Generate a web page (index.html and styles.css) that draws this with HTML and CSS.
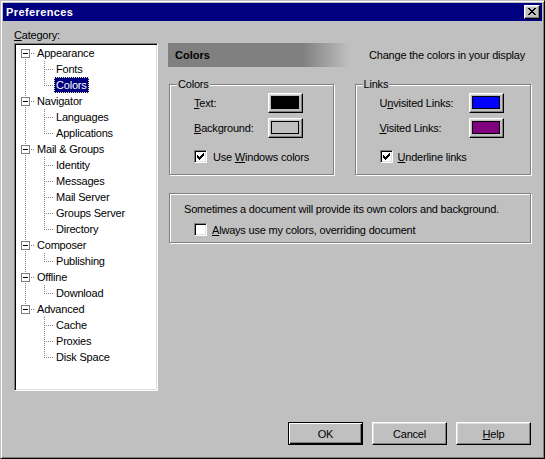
FILE: index.html
```html
<!DOCTYPE html>
<html>
<head>
<meta charset="utf-8">
<title>Preferences</title>
<link rel="stylesheet" href="styles.css">
</head>
<body>
<div class="window">
  <div class="titlebar">
    <span class="title">Preferences</span>
    <span class="close"><svg width="8" height="7" viewBox="0 0 8 7" shape-rendering="crispEdges"><path d="M0 0h2v1h-2z M6 0h2v1h-2z M1 1h2v1h-2z M5 1h2v1h-2z M2 2h4v1h-4z M3 3h2v1h-2z M2 4h4v1h-4z M1 5h2v1h-2z M5 5h2v1h-2z M0 6h2v1h-2z M6 6h2v1h-2z" fill="#000"/></svg></span>
  </div>
  <div class="body">
    <div class="left">
      <div class="cat-label"><u>C</u>ategory:</div>
      <div class="tree">
        <div class="row"><span class="cell rf"><span class="box"></span></span><span class="label">Appearance</span></div>
        <div class="row"><span class="cell v"></span><span class="cell t"></span><span class="label">Fonts</span></div>
        <div class="row"><span class="cell v"></span><span class="cell l"></span><span class="label sel">Colors</span></div>
        <div class="row"><span class="cell rm"><span class="box"></span></span><span class="label">Navigator</span></div>
        <div class="row"><span class="cell v"></span><span class="cell t"></span><span class="label">Languages</span></div>
        <div class="row"><span class="cell v"></span><span class="cell l"></span><span class="label">Applications</span></div>
        <div class="row"><span class="cell rm"><span class="box"></span></span><span class="label">Mail &amp; Groups</span></div>
        <div class="row"><span class="cell v"></span><span class="cell t"></span><span class="label">Identity</span></div>
        <div class="row"><span class="cell v"></span><span class="cell t"></span><span class="label">Messages</span></div>
        <div class="row"><span class="cell v"></span><span class="cell t"></span><span class="label">Mail Server</span></div>
        <div class="row"><span class="cell v"></span><span class="cell t"></span><span class="label">Groups Server</span></div>
        <div class="row"><span class="cell v"></span><span class="cell l"></span><span class="label">Directory</span></div>
        <div class="row"><span class="cell rm"><span class="box"></span></span><span class="label">Composer</span></div>
        <div class="row"><span class="cell v"></span><span class="cell l"></span><span class="label">Publishing</span></div>
        <div class="row"><span class="cell rm"><span class="box"></span></span><span class="label">Offline</span></div>
        <div class="row"><span class="cell v"></span><span class="cell l"></span><span class="label">Download</span></div>
        <div class="row"><span class="cell rl"><span class="box"></span></span><span class="label">Advanced</span></div>
        <div class="row"><span class="cell"></span><span class="cell t"></span><span class="label">Cache</span></div>
        <div class="row"><span class="cell"></span><span class="cell t"></span><span class="label">Proxies</span></div>
        <div class="row"><span class="cell"></span><span class="cell l"></span><span class="label">Disk Space</span></div>
      </div>
    </div>
    <div class="right">
      <div class="head-row">
        <div class="banner">Colors</div>
        <div class="desc">Change the colors in your display</div>
      </div>
      <div class="groups">
        <div class="group g-colors">
          <span class="legend">Colors</span>
          <div class="field-row"><span class="field-label"><u>T</u>ext:</span><span class="swatch-btn"><span class="swatch sw-black"></span></span></div>
          <div class="field-row"><span class="field-label"><u>B</u>ackground:</span><span class="swatch-btn"><span class="swatch sw-gray"></span></span></div>
          <div class="check-row"><span class="check"><svg width="7" height="7" viewBox="0 0 7 7" shape-rendering="crispEdges"><path d="M0 2h1v3h-1z M1 3h1v3h-1z M2 4h1v3h-1z M3 3h1v3h-1z M4 2h1v3h-1z M5 1h1v3h-1z M6 0h1v3h-1z" fill="#000"/></svg></span><span>Use <u>W</u>indows colors</span></div>
        </div>
        <div class="group g-links">
          <span class="legend">Links</span>
          <div class="field-row"><span class="field-label wide">U<u>n</u>visited Links:</span><span class="swatch-btn"><span class="swatch sw-blue"></span></span></div>
          <div class="field-row"><span class="field-label wide"><u>V</u>isited Links:</span><span class="swatch-btn"><span class="swatch sw-purple"></span></span></div>
          <div class="check-row narrow"><span class="check"><svg width="7" height="7" viewBox="0 0 7 7" shape-rendering="crispEdges"><path d="M0 2h1v3h-1z M1 3h1v3h-1z M2 4h1v3h-1z M3 3h1v3h-1z M4 2h1v3h-1z M5 1h1v3h-1z M6 0h1v3h-1z" fill="#000"/></svg></span><span><u>U</u>nderline links</span></div>
        </div>
      </div>
      <div class="group g-doc">
        <div class="doc-text">Sometimes a document will provide its own colors and background.</div>
        <div class="check-row doc-check"><span class="check"></span><span><u>A</u>lways use my colors, overriding document</span></div>
      </div>
    </div>
  </div>
  <div class="buttons">
    <button class="btn default">OK</button>
    <button class="btn">Cancel</button>
    <button class="btn"><u>H</u>elp</button>
  </div>
</div>
</body>
</html>
```
FILE: styles.css
```css
html, body {
  margin: 0;
  padding: 0;
  background: #c0c0c0;
}
body {
  font-family: "Liberation Sans", Arial, sans-serif;
  font-size: 11px;
  letter-spacing: -0.2px;
  color: #000;
}
.window {
  width: 545px;
  height: 459px;
  box-sizing: border-box;
  background: #c0c0c0;
  border: 1px solid;
  border-color: #c0c0c0 #000 #000 #c0c0c0;
  box-shadow: inset 1px 1px #fff, inset -1px -1px #808080;
  padding: 2px;
  display: flex;
  flex-direction: column;
}
.titlebar {
  height: 18px;
  flex: none;
  background: #000080;
  color: #fff;
  display: flex;
  align-items: center;
  padding: 0 2px 0 3px;
}
.title {
  font-weight: bold;
  font-size: 11px;
  letter-spacing: 0.4px;
}
.close {
  margin-left: auto;
  width: 16px;
  height: 14px;
  box-sizing: border-box;
  background: #c0c0c0;
  border: 1px solid;
  border-color: #fff #000 #000 #fff;
  box-shadow: inset -1px -1px #808080, inset 1px 1px #dfdfdf;
  display: flex;
  align-items: center;
  justify-content: center;
}
.close svg { display: block; margin: 0 1px 1px 0; }

.body {
  flex: 1;
  display: flex;
  gap: 10px;
  padding: 7px 11px 0 11px;
  min-height: 0;
}
.left {
  width: 144px;
  flex: none;
  display: flex;
  flex-direction: column;
}
.cat-label {
  height: 14px;
  line-height: 14px;
  margin-bottom: 1px;
}
.tree {
  height: 348px;
  box-sizing: border-box;
  background: #fff;
  border: 1px solid;
  border-color: #808080 #fff #fff #808080;
  box-shadow: inset 1px 1px #000, inset -1px -1px #dfdfdf;
  padding: 1px 0 0 1px;
}
.row {
  display: flex;
  height: 16px;
  align-items: flex-start;
}
.cell {
  display: block;
  width: 19px;
  height: 16px;
  flex: none;
  --dv: repeating-linear-gradient(to bottom, #808080 0 1px, transparent 1px 2px);
  --dh: repeating-linear-gradient(to right, #808080 0 1px, transparent 1px 2px);
}
.cell.v {
  background: var(--dv) 9px 0 / 1px 16px no-repeat;
}
.cell.t {
  background: var(--dh) 11px 8px / 8px 1px no-repeat, var(--dv) 9px 0 / 1px 16px no-repeat;
}
.cell.l {
  background: var(--dh) 11px 8px / 8px 1px no-repeat, var(--dv) 9px 0 / 1px 9px no-repeat;
}
.cell.rf {
  background: var(--dh) 15px 8px / 4px 1px no-repeat, var(--dv) 9px 8px / 1px 8px no-repeat;
}
.cell.rm {
  background: var(--dh) 15px 8px / 4px 1px no-repeat, var(--dv) 9px 0 / 1px 16px no-repeat;
}
.cell.rl {
  background: var(--dh) 15px 8px / 4px 1px no-repeat, var(--dv) 9px 0 / 1px 8px no-repeat;
}
.box {
  display: block;
  width: 9px;
  height: 9px;
  box-sizing: border-box;
  margin: 4px 0 0 5px;
  border: 1px solid #808080;
  background: linear-gradient(#000, #000) 1px 3px / 5px 1px no-repeat, #fff;
}
.label {
  height: 16px;
  line-height: 16px;
  padding: 0 2px;
  white-space: nowrap;
  box-sizing: border-box;
}
.label.sel {
  background: #000080;
  color: #fff;
  outline: 1px dotted #e8e8a0;
  outline-offset: -1px;
}

.right {
  flex: 1;
  min-width: 0;
  display: flex;
  flex-direction: column;
  padding-top: 15px;
}
.head-row {
  display: flex;
  align-items: center;
  height: 24px;
}
.banner {
  width: 182px;
  height: 24px;
  box-sizing: border-box;
  padding-left: 7px;
  line-height: 24px;
  font-weight: bold;
  letter-spacing: 0;
  background: linear-gradient(to right, #808080 135px, #c0c0c0 182px);
}
.desc {
  margin-left: 19px;
  white-space: nowrap;
}
.groups {
  display: flex;
  gap: 21px;
  margin-top: 17px;
  padding-left: 1px;
}
.group {
  position: relative;
  box-sizing: border-box;
  border: 1px solid #808080;
  box-shadow: inset 1px 1px #fff, 1px 1px #fff;
}
.g-colors {
  width: 165px;
  height: 91px;
  padding: 8px 0 0 24px;
}
.g-links {
  width: 177px;
  height: 91px;
  padding: 8px 0 0 24px;
}
.legend {
  position: absolute;
  top: -7px;
  left: 7px;
  background: #c0c0c0;
  padding: 0 1px;
  line-height: 13px;
}
.field-row {
  display: flex;
  align-items: center;
  height: 20px;
}
.field-row + .field-row { margin-top: 5px; }
.field-label { width: 74px; white-space: nowrap; }
.field-label.wide { width: 89px; }
.swatch-btn {
  display: block;
  width: 35px;
  height: 20px;
  box-sizing: border-box;
  background: #c0c0c0;
  border: 1px solid;
  border-color: #fff #000 #000 #fff;
  box-shadow: inset -1px -1px #808080, inset 1px 1px #dfdfdf;
  padding: 2px 3px 3px 2px;
}
.swatch {
  display: block;
  width: 100%;
  height: 100%;
  box-sizing: border-box;
  border: 1px solid #000;
}
.sw-black { background: #000; }
.sw-gray { background: #c0c0c0; }
.sw-blue { background: #0000ff; }
.sw-purple { background: #800080; }

.check-row {
  display: flex;
  align-items: center;
  gap: 6px;
  margin-top: 12px;
  white-space: nowrap;
}
.check-row.narrow { gap: 5px; }
.check {
  width: 13px;
  height: 13px;
  flex: none;
  box-sizing: border-box;
  background: #fff;
  border: 1px solid;
  border-color: #808080 #fff #fff #808080;
  box-shadow: inset 1px 1px #000, inset -1px -1px #dfdfdf;
  display: flex;
  align-items: center;
  justify-content: center;
}
.check svg { display: block; }

.g-doc {
  width: 362px;
  height: 50px;
  margin: 18px 0 0 1px;
  padding: 8px 0 0 14px;
}
.doc-text {
  line-height: 14px;
  white-space: nowrap;
}
.doc-check {
  margin: 7px 0 0 10px;
  gap: 5px;
}

.buttons {
  display: flex;
  justify-content: flex-end;
  gap: 9px;
  padding: 0 11px 11px 0;
  flex: none;
}
.btn {
  width: 75px;
  height: 23px;
  box-sizing: border-box;
  padding: 0;
  font: inherit;
  letter-spacing: inherit;
  color: #000;
  background: #c0c0c0;
  border: 1px solid;
  border-color: #fff #000 #000 #fff;
  box-shadow: inset -1px -1px #808080, inset 1px 1px #dfdfdf;
  display: flex;
  align-items: center;
  justify-content: center;
}
.btn.default {
  border-color: #000;
  box-shadow: inset 1px 1px #fff, inset -1px -1px #000, inset -2px -2px #808080;
}
```
